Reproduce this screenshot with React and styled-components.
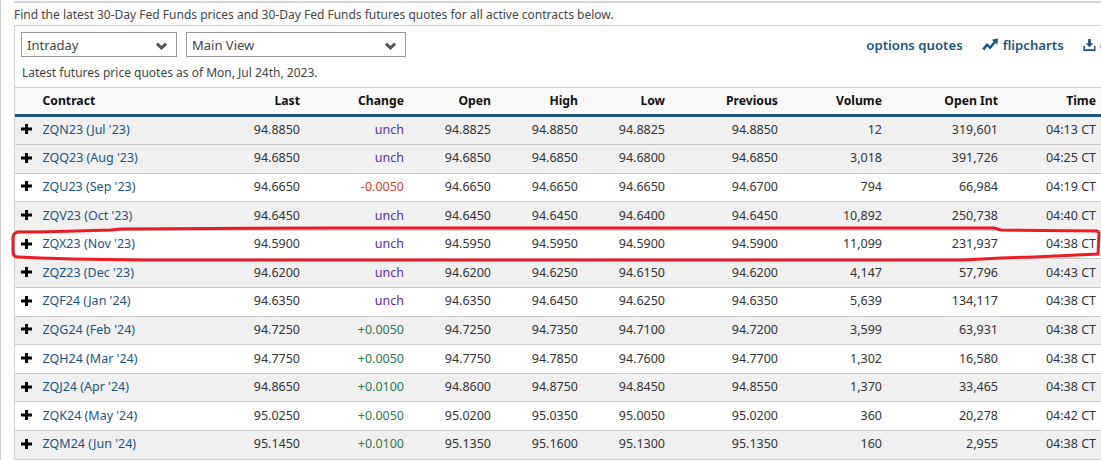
import React from 'react';
import styled, { createGlobalStyle } from 'styled-components';

const GlobalStyle = createGlobalStyle`
  html, body {
    margin: 0;
    padding: 0;
    background: #fff;
    overflow: hidden;
    height: 460px;
  }
  body {
    font-family: "Noto Sans", "Open Sans", sans-serif;
    color: #333;
  }
`;

const Page = styled.div`
  position: relative;
  width: 1101px;
  height: 460px;
  overflow: hidden;
  box-sizing: border-box;
  border-left: 1px solid #ccc;
  padding-left: 13px;
`;

const TopRule = styled.div`
  height: 2px;
  margin-top: 1px;
  background: #d5d5d5;
`;

const Intro = styled.p`
  margin: 0;
  height: 22px;
  font-size: 12px;
  line-height: 24px;
  color: #444;
`;

const Panel = styled.div`
  width: 1087px;
  border-top: 1px solid #ccc;
  border-left: 1px solid #ccc;
  box-sizing: border-box;
`;

const Toolbar = styled.div`
  display: flex;
  align-items: center;
  width: 1148px;
  padding: 6px 0 0 6px;
  box-sizing: border-box;
`;

const Select = styled.div`
  display: flex;
  align-items: center;
  justify-content: space-between;
  box-sizing: border-box;
  width: ${p => p.$width}px;
  height: 25px;
  margin-right: 9px;
  padding: 0 8px 0 5px;
  border: 1px solid #999;
  font-size: 13px;
  color: #444;
`;

const Links = styled.div`
  display: flex;
  align-items: center;
  gap: 19px;
  margin-left: auto;
`;

const ToolLink = styled.a`
  display: flex;
  align-items: center;
  gap: 4px;
  font-size: 13.2px;
  font-weight: 600;
  color: #1b5480;
  white-space: nowrap;
`;

const AsOf = styled.div`
  height: 30px;
  padding-left: 7px;
  font-size: 12px;
  line-height: 32px;
  color: #444;
`;

const Row = styled.div`
  display: grid;
  grid-template-columns: 23px 126px 141px 104px 87px 87px 87px 113px 104px 116px 98px;
  align-items: center;
  box-sizing: border-box;
`;

const HeadRow = styled(Row)`
  height: 29.5px;
  background: #f9f9f9;
  border-top: 1px solid #ccc;
  border-bottom: 3px solid #1b5480;
  font-size: 12.2px;
  font-weight: 700;
  color: #111;
`;

const BodyRow = styled(Row)`
  height: 28.6px;
  padding-bottom: 2px;
  background: ${p => (p.$shaded ? '#f0f0f0' : '#fff')};
  border-bottom: 1px solid #ccc;
  font-size: 12.5px;
  color: #333;
`;

const Cell = styled.div`
  padding-right: 5px;
  text-align: right;
  white-space: nowrap;
  color: ${p => p.$color || 'inherit'};
`;

const Symbol = styled.a`
  padding-left: 4.5px;
  color: #1b5480;
  white-space: nowrap;
`;

const HeadSymbol = styled.div`
  padding-left: 4.5px;
`;

const Expand = styled.svg`
  width: 11px;
  height: 10px;
  margin-left: 6px;
  fill: #000;
`;

const Caret = styled.svg`
  width: 11px;
  height: 8px;
  margin: 3px 1px 0 0;
`;

const Marker = styled.svg`
  position: absolute;
  left: 0;
  top: 0;
  pointer-events: none;
`;

const Chevron = () => (
  <Caret viewBox="0 0 11 8">
    <path d="M1 1.6 L5.5 6 L10 1.6" fill="none" stroke="#555" strokeWidth="3" />
  </Caret>
);

const ChartIcon = () => (
  <svg width="17" height="14" viewBox="0 0 17 14" fill="#1b5480">
    <path d="M0.3 10.6 L5 5 L8 8 L11.6 3.6 L9.8 1.8 L16 0.6 L15.4 6.8 L13.6 5 L8.2 11.6 L5.2 8.6 L2.2 12.4 Z" />
  </svg>
);

const DownloadIcon = () => (
  <svg width="13" height="14" viewBox="0 0 14 14" fill="#1b5480">
    <path d="M5.5 0.5 H8.5 V5 H11 L7 9.3 L3 5 H5.5 Z" />
    <path d="M0.5 8 H2.2 V11.6 H11.8 V8 H13.5 V13.4 H0.5 Z" />
  </svg>
);

const Plus = () => (
  <Expand viewBox="0 0 11 10">
    <path d="M4 0 H7 V3.5 H11 V6.5 H7 V10 H4 V6.5 H0 V3.5 H4 Z" />
  </Expand>
);

const COLUMNS = ['Last', 'Change', 'Open', 'High', 'Low', 'Previous', 'Volume', 'Open Int', 'Time'];

const ROWS = [
  ['ZQN23 (Jul \'23)', '94.8850', 'unch', '94.8825', '94.8850', '94.8825', '94.8850', '12', '319,601', '04:13 CT'],
  ['ZQQ23 (Aug \'23)', '94.6850', 'unch', '94.6850', '94.6850', '94.6800', '94.6850', '3,018', '391,726', '04:25 CT'],
  ['ZQU23 (Sep \'23)', '94.6650', '-0.0050', '94.6650', '94.6650', '94.6650', '94.6700', '794', '66,984', '04:19 CT'],
  ['ZQV23 (Oct \'23)', '94.6450', 'unch', '94.6450', '94.6450', '94.6400', '94.6450', '10,892', '250,738', '04:40 CT'],
  ['ZQX23 (Nov \'23)', '94.5900', 'unch', '94.5950', '94.5950', '94.5900', '94.5900', '11,099', '231,937', '04:38 CT'],
  ['ZQZ23 (Dec \'23)', '94.6200', 'unch', '94.6200', '94.6250', '94.6150', '94.6200', '4,147', '57,796', '04:43 CT'],
  ['ZQF24 (Jan \'24)', '94.6350', 'unch', '94.6350', '94.6450', '94.6250', '94.6350', '5,639', '134,117', '04:38 CT'],
  ['ZQG24 (Feb \'24)', '94.7250', '+0.0050', '94.7250', '94.7350', '94.7100', '94.7200', '3,599', '63,931', '04:38 CT'],
  ['ZQH24 (Mar \'24)', '94.7750', '+0.0050', '94.7750', '94.7850', '94.7600', '94.7700', '1,302', '16,580', '04:38 CT'],
  ['ZQJ24 (Apr \'24)', '94.8650', '+0.0100', '94.8600', '94.8750', '94.8450', '94.8550', '1,370', '33,465', '04:38 CT'],
  ['ZQK24 (May \'24)', '95.0250', '+0.0050', '95.0200', '95.0350', '95.0050', '95.0200', '360', '20,278', '04:42 CT'],
  ['ZQM24 (Jun \'24)', '95.1450', '+0.0100', '95.1350', '95.1600', '95.1300', '95.1350', '160', '2,955', '04:38 CT'],
];

const changeColor = (value) => {
  if (value === 'unch') return '#5b2d9e';
  return value.startsWith('-') ? '#d0402f' : '#2a7a50';
};

export default function App() {
  return (
    <>
      <GlobalStyle />
      <Page>
        <TopRule />
        <Intro>Find the latest 30-Day Fed Funds prices and 30-Day Fed Funds futures quotes for all active contracts below.</Intro>
        <Panel>
          <Toolbar>
            <Select $width={156}>Intraday <Chevron /></Select>
            <Select $width={220}>Main View <Chevron /></Select>
            <Links>
              <ToolLink>options quotes</ToolLink>
              <ToolLink><ChartIcon />flipcharts</ToolLink>
              <ToolLink><DownloadIcon />download</ToolLink>
            </Links>
          </Toolbar>
          <AsOf>Latest futures price quotes as of Mon, Jul 24th, 2023.</AsOf>
          <HeadRow>
            <div />
            <HeadSymbol>Contract</HeadSymbol>
            {COLUMNS.map(name => <Cell key={name}>{name}</Cell>)}
          </HeadRow>
          {ROWS.map(([symbol, ...values], i) => (
            <BodyRow key={symbol} $shaded={i % 2 === 1 || i === 0}>
              <Plus />
              <Symbol>{symbol}</Symbol>
              {values.map((value, j) => (
                <Cell key={j} $color={j === 1 ? changeColor(value) : undefined}>{value}</Cell>
              ))}
            </BodyRow>
          ))}
        </Panel>
        {/* hand drawn highlight around the Nov '23 row */}
        <Marker width="1101" height="460" viewBox="0 0 1101 460">
          <path
            d="M40 232 L110 230 L120 229 L330 228 L993 228 L1000 230 L1096 231 L1098 233 L1097 254 L1033 257 L1000 258 L962 260 L143 260 L72 259 L40 258 L18 257 Q12 257 12 252 L12 238 Q12 233 17 232 Z"
            fill="none"
            stroke="#ed1c24"
            strokeWidth="3"
          />
        </Marker>
      </Page>
    </>
  );
}
